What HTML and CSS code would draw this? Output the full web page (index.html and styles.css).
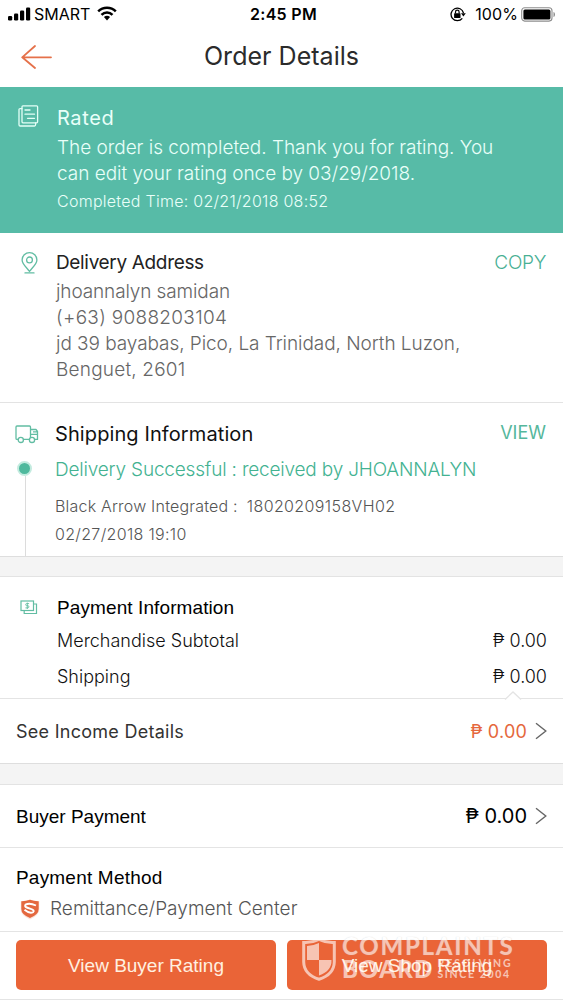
FILE: index.html
```html
<!DOCTYPE html>
<html lang="en">
<head>
<meta charset="utf-8">
<title>Order Details</title>
<link rel="stylesheet" href="styles.css">
</head>
<body>
<div class="screen">
  <header class="status-bar">
    <div class="carrier">
      <svg width="23" height="14" viewBox="0 0 23 14"><rect x="0" y="9" width="4.2" height="4.5" rx="1.2"/><rect x="6" y="6.5" width="4.2" height="7" rx="1.2"/><rect x="12" y="3.5" width="4.2" height="10" rx="1.2"/><rect x="18" y="0.5" width="4.2" height="13" rx="1.2"/></svg>
      <span class="carrier-name">SMART</span>
      <svg class="wifi" width="20" height="15" viewBox="0 0 20 15"><g fill="none" stroke="#000" stroke-width="2.5"><path d="M1.2 5.3a12.6 12.6 0 0 1 17.6 0"/><path d="M4.5 8.8a7.8 7.8 0 0 1 11 0"/></g><path d="M6.9 11.1a4.5 4.5 0 0 1 6.2 0L10 14.4z"/></svg>
    </div>
    <span class="clock">2:45 PM</span>
    <div class="power">
      <svg width="16" height="15" viewBox="0 0 16 15"><path d="M12.300 11.300A6.300 6.300 0 1 1 13.500 6" fill="none" stroke="#000" stroke-width="1.300"/><path d="M11 6.200h4.800l-2.400 3.300z"/><rect x="4.100" y="6.200" width="6.400" height="4.800" rx=".6"/><path d="M5.500 6.500V5a1.800 1.800 0 0 1 3.600 0v1.500" fill="none" stroke="#000" stroke-width="1.200"/></svg>
      <span class="percent">100%</span>
      <svg width="35" height="15" viewBox="0 0 35 15"><rect x=".7" y=".7" width="30.3" height="13.4" rx="3" fill="none" stroke="#8d8d8d" stroke-width="1.1"/><rect x="2.4" y="2.4" width="27" height="10" rx="1.5"/><path d="M32.5 5c2 .5 2 4.500 0 5z" fill="#8d8d8d"/></svg>
    </div>
  </header>

  <nav class="nav">
    <svg class="back" width="31" height="24" viewBox="0 0 31 24" fill="none" stroke="#e5714a" stroke-width="1.8" stroke-linecap="round" stroke-linejoin="round"><path d="M14 1L1.200 12.300 14 23M1.200 12.300H30"/></svg>
    <h1>Order Details</h1>
  </nav>

  <section class="banner">
    <svg class="icon" width="21" height="22" viewBox="0 0 21 22" fill="none" stroke="#e4fff7" stroke-width="1.3" stroke-linejoin="round" stroke-linecap="round"><rect x="4" y=".8" width="15.600" height="17" rx="1"/><path d="M4 3.600H2.200Q1 3.600 1 4.800V19.800Q1 21 2.200 21H16.500Q17.600 21 17.600 19.500V18M7 5h5M7 9.200h9.500M9.500 13.300h7"/></svg>
    <div class="banner-text">
      <h2 class="rated">Rated</h2>
      <p class="light">The order is completed. Thank you for rating. You<br>can edit your rating once by 03/29/2018.</p>
      <p class="completed">Completed Time: 02/21/2018 08:52</p>
    </div>
  </section>

  <section class="address">
    <svg class="icon" width="17" height="22" viewBox="0 0 17 22" fill="none" stroke="#62bda3" stroke-width="1.3" stroke-linecap="round"><path d="M8.500 19.300C5 14.800 1.100 11.800 1.100 7.900a7.400 7.200 0 0 1 14.800 0C15.900 11.800 12 14.800 8.500 19.300z"/><circle cx="8.500" cy="7.900" r="2.900"/><path d="M4 20.900h9"/></svg>
    <div class="grow">
      <div class="row"><h2 class="address-title">Delivery Address</h2><a class="copy">COPY</a></div>
      <p class="light"><span class="name">jhoannalyn samidan</span><br><span class="phone">(+63) 9088203104</span><br><span class="street">jd 39 bayabas, Pico, La Trinidad, North Luzon,</span><br><span class="city">Benguet, 2601</span></p>
    </div>
  </section>

  <section class="shipping">
    <div class="track">
      <svg width="24" height="19" viewBox="0 0 24 19" fill="none" stroke="#62bda3" stroke-width="1.3" stroke-linejoin="round"><path d="M3.200 14.400H2Q1 14.400 1 13.400V2Q1 1 2 1H14.500Q15.500 1 15.500 2V14.400H8.200M15.500 4.500H21L22.500 6.500V14.400H20M15.500 9.400H22.500M18 6.900H22"/><circle cx="5.800" cy="14.900" r="2.600" fill="#fff"/><circle cx="17" cy="14.900" r="2.600" fill="#fff"/></svg>
      <i class="dot"></i>
      <i class="line"></i>
    </div>
    <div class="grow">
      <div class="row"><h2 class="shipping-title">Shipping Information</h2><a class="view">VIEW</a></div>
      <p class="delivered">Delivery Successful : received by JHOANNALYN</p>
      <p class="courier"><span>Black Arrow Integrated :</span><span class="tracking-number">18020209158VH02</span></p>
      <p class="date">02/27/2018 19:10</p>
    </div>
  </section>
  <div class="gap"></div>

  <section class="payment">
    <svg class="icon" width="18" height="15" viewBox="0 0 18 15" fill="none" stroke="#62bda3" stroke-width="1.200"><rect x="1" y="1" width="12.500" height="9.500"/><path d="M13.500 4H16.500V13.500H4.200V10.500"/><path stroke-width=".9" d="M9.100 3.600H6.600Q5.700 3.600 5.700 4.600T6.600 5.700H8Q8.900 5.700 8.900 6.700T8 7.900H5.400M7.300 2.600V9"/></svg>
    <div class="grow">
      <h2 class="payment-title">Payment Information</h2>
      <div class="row line-item"><span>Merchandise Subtotal</span><span>₱ 0.00</span></div>
      <div class="row line-item"><span>Shipping</span><span>₱ 0.00</span></div>
    </div>
  </section>
  <section class="income">
    <svg class="notch" width="20" height="9" viewBox="0 0 20 9"><path d="M2 8.500L10 1l8 7.500" fill="#fff" stroke="#e4e4e4" stroke-width="1.300"/></svg>
    <span class="income-label">See Income Details</span>
    <span class="income-amount">₱ 0.00</span>
    <svg class="chevron" width="12" height="18" viewBox="0 0 12 18"><path d="M1 1.200L10.800 9 1 16.800" fill="none" stroke="#666" stroke-width="1.400"/></svg>
  </section>
  <div class="gap gap-second"></div>

  <section class="buyer">
    <span class="buyer-label">Buyer Payment</span>
    <span class="buyer-amount">₱ 0.00</span>
    <svg class="chevron" width="12" height="18" viewBox="0 0 12 18"><path d="M1 1.200L10.800 9 1 16.800" fill="none" stroke="#666" stroke-width="1.400"/></svg>
  </section>
  <section class="method">
    <h2 class="method-title">Payment Method</h2>
    <div class="method-row">
      <svg width="20" height="21" viewBox="0 0 20 21"><path d="M10 .5Q14.500 2.300 19.300 2.200V10.500Q19.300 16.500 10 20.500Q.7 16.500.7 10.500V2.200Q5.500 2.300 10 .5z" fill="#fbe4db"/><path d="M10 .8Q14 2.300 18.700 2.200V10Q18.700 15.500 10 19Q1.300 15.500 1.300 10V2.200Q6 2.300 10 .8z" fill="#e4683f"/><path d="M16 6.500Q9.500 3.400 5.600 5.600C3.900 7.900 7 8.800 10 9.700C13.800 10.800 14.500 12 13 13.200C10.500 14.700 7.500 13.200 4.500 10.800" fill="none" stroke="#fff" stroke-width="1.900"/></svg>
      <span>Remittance/Payment Center</span>
    </div>
  </section>

  <footer class="actions">
    <a class="button">View Buyer Rating</a>
    <a class="button">View Shop Rating</a>
    <div class="watermark">
      <svg width="34" height="43" viewBox="0 0 34 43"><path d="M17 1.500Q24 5 32.300 4.500V24Q32 36.500 17 41.300Q2 36.500 1.700 24V4.500Q10 5 17 1.500z" fill="none" stroke="#fff" stroke-width="3"/><path d="M5 8Q12 7.500 17 5V22H5zM17 22H29.500Q30 33 17 37.500z" fill="#fff"/></svg>
      <div class="watermark-text">
        <div class="wm-top">COMPLAINTS</div>
        <div class="wm-bottom"><span class="wm-board">BOARD</span><span class="wm-small">RESOLVING<br><span class="wm-since">SINCE 2004</span></span></div>
      </div>
    </div>
  </footer>
</div>
</body>
</html>
```
FILE: styles.css
```css
* { box-sizing: border-box; }
body {
  margin: 0;
  background: #fff;
  color: #222;
  font-family: Inter, "Liberation Sans", sans-serif;
}
h1, h2, p { margin: 0; font-weight: 400; }
svg { display: block; flex: none; }
.screen { width: 563px; height: 1000px; display: flex; flex-direction: column; overflow: hidden; }
.screen > * { flex: none; }
.row { display: flex; justify-content: space-between; }
.grow { flex: 1; }

.status-bar {
  height: 28px;
  padding: 0 7px 0 8px;
  display: grid;
  grid-template-columns: 1fr auto 1fr;
  align-items: center;
  font-size: 16px;
  line-height: 28px;
  color: #000;
}
.carrier { display: flex; align-items: center; }
.carrier-name { margin-left: 3px; }
.wifi { margin-left: 7px; margin-top: -1px; }
.clock { font-weight: 600; letter-spacing: .31px; padding-left: 3px; }
.power { display: flex; align-items: center; justify-content: flex-end; }
.percent { margin: 0 3px 0 9px; letter-spacing: .1px; }

.nav { height: 59px; position: relative; text-align: center; }
.back { position: absolute; left: 21px; top: 17px; }
h1 { font-size: 25px; line-height: 57px; letter-spacing: .03px; color: #2b2b2b; }

.banner {
  height: 146px;
  padding: 18px 0 0 18px;
  display: flex;
  background: #57bba7;
  color: #e9fff9;
}
.banner-text { margin-left: 18px; }
.rated { font-size: 20px; line-height: 26px; letter-spacing: .6px; }
.light { font-size: 19px; line-height: 26px; font-weight: 300; }
.banner .light { margin-top: 4px; letter-spacing: -.03px; }
.completed { font-size: 16px; font-weight: 300; line-height: 26px; letter-spacing: .27px; margin-top: 1px; }

.address {
  height: 170px;
  padding: 17px 17px 0 21px;
  display: flex;
  border-bottom: 1px solid #e3e3e3;
}
.address .icon { margin: 2px 17px 0 0; }
.address .grow { padding-left: 1px; }
.address .row { line-height: 26px; }
.address .light { color: #666; line-height: 25.900px; margin-top: 3px; }
.address-title { font-size: 19px; letter-spacing: -.34px; }
.copy { font-size: 19px; font-weight: 300; letter-spacing: -.3px; color: #48b094; }
.name { letter-spacing: -.12px; }
.phone { letter-spacing: .3px; }
.street { letter-spacing: -.06px; }
.city { letter-spacing: .2px; }

.shipping {
  height: 153px;
  padding: 18px 17px 0 15px;
  display: flex;
}
.track { width: 24px; margin-right: 16px; display: flex; flex-direction: column; padding-top: 4px; }
.dot { width: 15px; height: 15px; margin: 17px 0 0 2px; border-radius: 50%; background: #4fb99d; border: 2px solid #c3ebdf; }
.line { width: 1px; flex: 1; margin-left: 10px; background: #dcdcdc; }
.shipping .row { line-height: 27px; }
.shipping-title { font-size: 20px; letter-spacing: .1px; color: #111; }
.view { font-size: 18px; line-height: 24px; color: #55b79c; }
.delivered { font-size: 19px; font-weight: 300; line-height: 26px; letter-spacing: -.19px; margin-top: 9px; color: #43b291; }
.courier { font-size: 16px; font-weight: 300; line-height: 24px; letter-spacing: .2px; margin-top: 11px; color: #555; }
.tracking-number { margin-left: 9px; letter-spacing: .38px; }
.date { font-size: 16px; font-weight: 300; line-height: 24px; letter-spacing: .32px; margin-top: 4px; color: #555; }

.gap { height: 21px; background: #f4f4f4; border-top: 1px solid #dedede; border-bottom: 1px solid #e3e3e3; }
.gap-second { height: 22px; }

.payment { height: 121px; padding: 18px 16px 0 20px; display: flex; }
.payment .icon { margin: 5px 19px 0 0; }
.payment-title { font: 19px/26px "Liberation Sans", sans-serif; letter-spacing: .1px; color: #000; }
.line-item { font-size: 18px; font-weight: 300; line-height: 35.500px; color: #111; }
.payment-title + .line-item { margin-top: 2px; }

.income, .buyer { display: flex; align-items: center; padding: 0 16px; position: relative; }
.income { height: 65px; border-top: 1px solid #e4e4e4; font-size: 18px; }
.notch { position: absolute; left: 503px; top: -8px; }
.income-label { flex: 1; letter-spacing: .27px; color: #333; }
.income-amount { letter-spacing: .2px; color: #e5673c; }
.chevron { margin-left: 8px; }
.buyer { height: 63px; border-bottom: 1px solid #e4e4e4; color: #000; }
.buyer-label { flex: 1; padding-top: 1px; font: 19px "Liberation Sans", sans-serif; }
.buyer-amount { font-size: 20px; }

.method { height: 83px; padding: 17px 16px 0; }
.method-title { font: 19px/26px "Liberation Sans", sans-serif; letter-spacing: .2px; color: #000; }
.method-row { display: flex; align-items: center; gap: 10px; padding-left: 4px; margin-top: 5px; font-size: 19px; font-weight: 300; line-height: 26px; letter-spacing: .04px; color: #555; }

.actions {
  position: relative;
  height: 69px;
  padding: 8px 16px 0;
  display: flex;
  gap: 11px;
  border-top: 1px solid #e4e4e4;
  border-bottom: 1px solid #e4e4e4;
}
.button {
  flex: 1;
  height: 50px;
  border-radius: 5px;
  background: #ea6437;
  color: #fff0e0;
  text-align: center;
  font: 19px/52px "Liberation Sans", sans-serif;
}
.watermark {
  position: absolute;
  left: 302px;
  top: 6px;
  display: flex;
  opacity: .62;
  color: #fff;
  font-family: Lato, sans-serif;
  white-space: nowrap;
}
.watermark-text { margin: -1px 0 0 6px; }
.wm-top { font-size: 24px; line-height: 18px; font-weight: 700; letter-spacing: 1.780px; text-shadow: 0 0 1px #bbb; }
.wm-bottom { display: flex; margin-top: 5px; }
.wm-board { font-size: 24px; line-height: 18px; font-weight: 900; letter-spacing: 1.180px; }
.wm-small { margin: -2px 0 0 4px; font-size: 10.500px; line-height: 10.500px; font-weight: 700; letter-spacing: 1.950px; }
.wm-since { letter-spacing: 1.650px; }
```
